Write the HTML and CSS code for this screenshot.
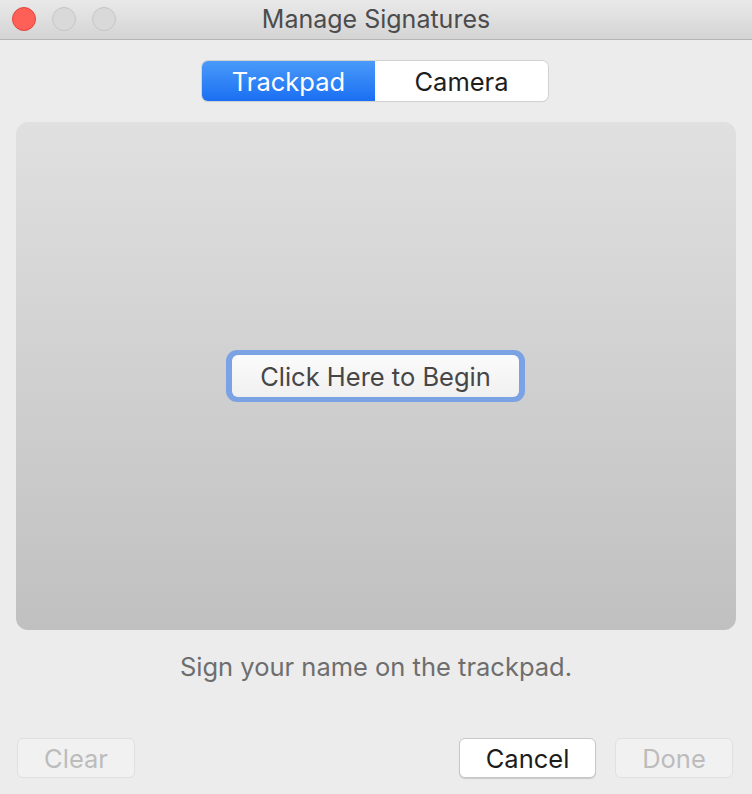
FILE: index.html
```html
<!DOCTYPE html>
<html>
<head>
<meta charset="utf-8">
<link rel="stylesheet" href="styles.css">
</head>
<body>
<div class="window">
  <div class="titlebar">
    <div class="lights">
      <span class="light red"></span>
      <span class="light"></span>
      <span class="light"></span>
    </div>
    <div class="title">Manage Signatures</div>
  </div>
  <div class="content">
    <div class="segmented">
      <div class="seg active">Trackpad</div>
      <div class="seg">Camera</div>
    </div>
    <div class="pad">
      <div class="focus-ring"><button class="begin">Click Here to Begin</button></div>
    </div>
    <div class="hint">Sign your name on the trackpad.</div>
    <div class="actions">
      <button class="btn disabled">Clear</button>
      <div class="right">
        <button class="btn cancel">Cancel</button>
        <button class="btn disabled">Done</button>
      </div>
    </div>
  </div>
</div>
</body>
</html>
```
FILE: styles.css
```css
* { box-sizing: border-box; }
html, body { margin: 0; padding: 0; }
body {
  width: 752px; height: 794px; overflow: hidden;
  background: #ececec;
  font-family: "Inter", "Liberation Sans", sans-serif;
}
.window { width: 752px; height: 794px; display: flex; flex-direction: column; }
.titlebar {
  height: 40px; flex: none;
  background: linear-gradient(#e9e9e9, #d4d4d4);
  border-bottom: 1px solid #b4b4b4;
  display: flex; align-items: center; justify-content: center;
  position: relative;
}
.lights {
  position: absolute; left: 12px; top: 7px;
  display: flex; gap: 16px;
}
.light {
  width: 24px; height: 24px; border-radius: 50%;
  background: #d9d9d9; border: 1px solid #c6c6c6;
}
.light.red { background: #fe5f57; border-color: #e2463f; }
.title { font-size: 25px; color: #4c4c4c; margin-top: -1px; }
.content { padding: 21px 16px 0 16px; display: flex; flex-direction: column; }
.segmented {
  align-self: center; margin-right: 2px;
  display: flex; height: 40px;
  border-radius: 6px;
  box-shadow: 0 0 0 1px #d2d2d2, 0 1px 1px rgba(0,0,0,0.12);
  overflow: hidden;
}
.seg {
  width: 173px; display: flex; align-items: center; justify-content: center;
  font-size: 25.5px; color: #1e1e1e; background: #fff;
}
.seg.active {
  background: linear-gradient(#4a9af9, #1a6ff2);
  color: #fff;
}
.pad {
  margin-top: 21px; height: 508px;
  border-radius: 12px;
  background: linear-gradient(#e0e0e0, #c0c0c0);
  display: flex; align-items: center; justify-content: center;
}
.focus-ring {
  margin-right: 1px;
  padding: 5px 6px; border-radius: 11px;
  background: #7ba3e4;
}
.begin {
  width: 287px; height: 42px;
  border: none; border-radius: 6px;
  background: linear-gradient(#fbfbfb, #f0f0f0);
  font-family: inherit; font-size: 25.5px; color: #464646;
  padding: 0;
}
.hint {
  margin-top: 21px; text-align: center;
  font-size: 25.5px; color: #6e6e6e;
}
.actions {
  margin-top: 56px;
  display: flex; justify-content: space-between; align-items: center;
  padding: 0 3px 0 1px;
}
.right { display: flex; gap: 19px; }
.btn {
  height: 40px; border-radius: 6px;
  font-family: inherit; font-size: 25.5px; padding: 0;
}
.btn.disabled {
  width: 118px;
  background: #f1f1f1; color: #bcbcbc;
  border: 1px solid #e0e0e0;
}
.btn.cancel {
  width: 137px;
  background: #fff; color: #1c1c1c;
  border: 1px solid #c8c8c8;
  box-shadow: 0 1px 1px rgba(0,0,0,0.15);
}
```
